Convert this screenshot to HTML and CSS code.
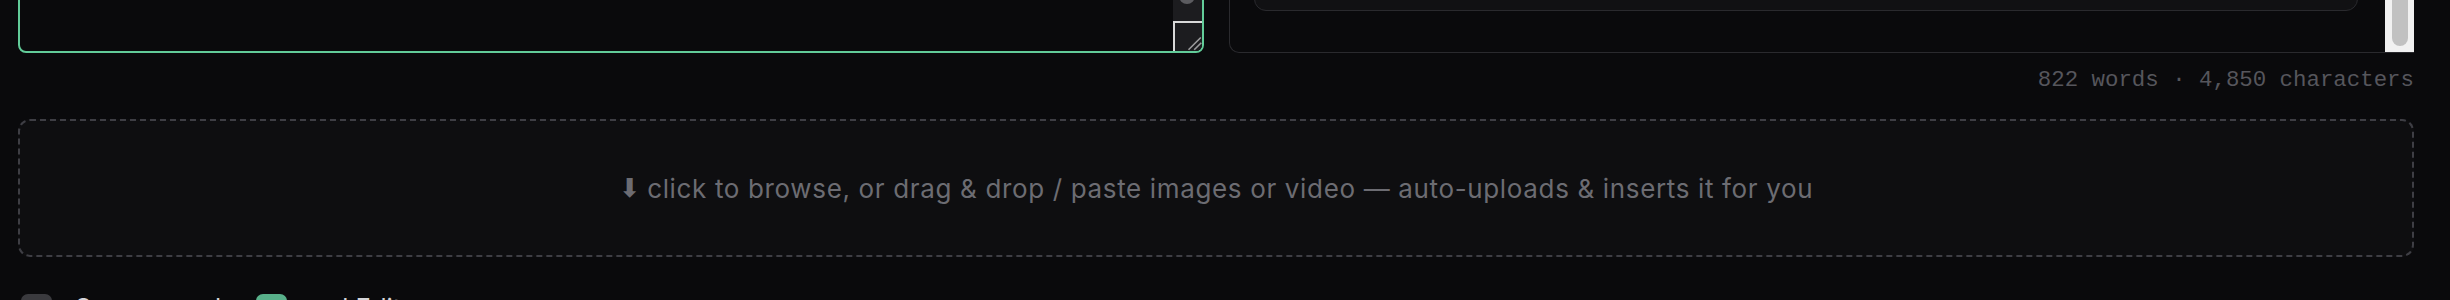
FILE: index.html
```html
<!DOCTYPE html>
<html lang="en">
<head>
<meta charset="utf-8">
<title>Editor</title>
<link rel="stylesheet" href="styles.css">
</head>
<body>
<div class="page">
  <div class="editor-row">
    <div class="source">
      <div class="source-text"></div>
      <div class="vscroll">
        <div class="vthumb"></div>
        <div class="resizer">
          <svg width="29" height="30" viewBox="0 0 29 30"><path d="M15.5 28.8 L27.8 16.5 M21.2 28.8 L28.3 21.7" stroke="#9a9a9c" stroke-width="1.6" fill="none"/></svg>
        </div>
      </div>
    </div>
    <div class="preview">
      <div class="preview-body">
        <div class="preview-card"></div>
      </div>
      <div class="pscroll"><div class="pthumb"></div></div>
    </div>
  </div>
  <div class="meta">822 words · 4,850 characters</div>
  <div class="dropzone"><span class="arrow">⬇</span> click to browse, or drag &amp; drop / paste images or video — auto-uploads &amp; inserts it for you</div>
  <div class="options">
    <label class="opt"><span class="box"></span><span class="opt-label">Source mode</span></label>
    <label class="opt"><span class="box box-on"></span><span class="opt-label">md Editor</span></label>
  </div>
</div>
</body>
</html>
```
FILE: styles.css
```css
html, body {
  margin: 0;
  padding: 0;
  background: #0a0a0c;
  height: 300px;
  overflow: hidden;
}
body {
  font-family: Inter, "Noto Sans", sans-serif;
}
.page {
  margin-top: -347px;
  padding: 0 36px 0 18px;
}
.editor-row {
  display: grid;
  grid-template-columns: 1fr 1fr;
  gap: 25px;
  height: 400px;
}
.source {
  display: flex;
  border: 2px solid #62cc99;
  border-radius: 8px;
  background: #0a0a0c;
  overflow: hidden;
}
.source-text {
  flex: 1;
}
.vscroll {
  width: 29px;
  background: #1c1c1f;
  display: flex;
  flex-direction: column;
}
.vthumb {
  flex: 1;
  width: 16px;
  margin: 0 auto 17px;
  background: #5c5c60;
  border-radius: 8px;
}
.resizer {
  height: 30px;
  box-sizing: border-box;
  border-top: 2px solid #d9d9d9;
  border-left: 2px solid #d9d9d9;
  background: #1c1c1f;
  position: relative;
}
.resizer svg {
  position: absolute;
  right: 0;
  bottom: 0;
}
.preview {
  display: flex;
  border: 1px solid #2a2a2e;
  border-right: 0;
  border-radius: 10px 0 0 10px;
  background: #0a0a0c;
}
.preview-body {
  flex: 1;
  display: flex;
  padding: 0 27px 41px 24px;
}
.preview-card {
  flex: 1;
  border: 1px solid #2a2a2e;
  border-radius: 12px;
  background: #111113;
}
.pscroll {
  width: 29px;
  background: #f1f1f1;
  display: flex;
  flex-direction: column;
  padding-bottom: 6px;
}
.pthumb {
  flex: 1;
  width: 16px;
  margin: 0 auto;
  background: #c1c1c1;
  border-radius: 8px;
}
.meta {
  margin-top: 11px;
  text-align: right;
  font-family: "Liberation Mono", "DejaVu Sans Mono", monospace;
  font-size: 22.4px;
  line-height: 32px;
  color: #56565c;
}
.dropzone {
  margin-top: 23px;
  height: 138px;
  box-sizing: border-box;
  border: 2px dashed #3e3e44;
  border-radius: 12px;
  background: #0e0e10;
  display: flex;
  align-items: center;
  justify-content: center;
  font-size: 26px;
  letter-spacing: 0.65px;
  color: #6c6c72;
}
.arrow {
  font-family: "DejaVu Sans", sans-serif;
  margin-right: 6px;
}
.options {
  margin-top: 37px;
  display: flex;
  gap: 20px;
  padding-left: 3px;
}
.opt {
  display: flex;
  align-items: flex-start;
  gap: 23px;
}
.box {
  width: 31px;
  height: 31px;
  border-radius: 7px;
  background: #3a3a3e;
}
.box-on {
  background: #58b08a;
}
.opt-label {
  font-size: 25.6px;
  line-height: 27px;
  color: #d4d4d8;
}
```
